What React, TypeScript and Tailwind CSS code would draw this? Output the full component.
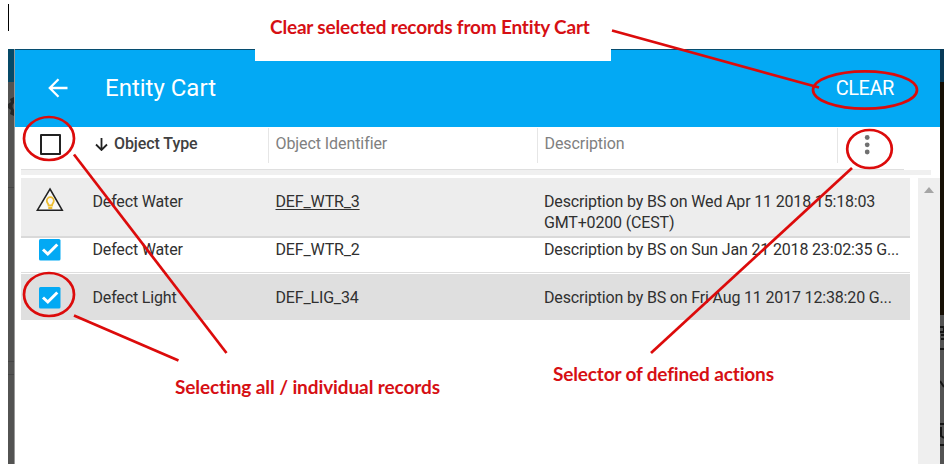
import type { ReactNode } from "react";

const records = [
  {
    type: "Defect Water",
    id: "DEF_WTR_3",
    description: "Description by BS on Wed Apr 11 2018 15:18:03 GMT+0200 (CEST)",
    icon: "warning",
  },
  {
    type: "Defect Water",
    id: "DEF_WTR_2",
    description: "Description by BS on Sun Jan 21 2018 23:02:35 G...",
    icon: "checked",
  },
  {
    type: "Defect Light",
    id: "DEF_LIG_34",
    description: "Description by BS on Fri Aug 11 2017 12:38:20 G...",
    icon: "checked",
  },
];

const rowStyles = [
  "h-[60px] border-b-2 border-[#d9d9d9] bg-[#ededed] pt-[13px]",
  "h-[35px] whitespace-nowrap border-b border-[#dedede] bg-white pt-[1px]",
  "mt-px h-[46px] whitespace-nowrap bg-[#dfdfdf] pt-[13px]",
];

function CheckedBox() {
  return (
    <svg width="22" height="22" viewBox="0 0 22 22">
      <rect width="21.500" height="21.500" rx="1.500" fill="#03a9f4" />
      <path d="M4 10.500 L8.800 15 L18.300 5.500" fill="none" stroke="#fff" strokeWidth="3" />
    </svg>
  );
}

function WarningIcon() {
  return (
    <svg width="28" height="25" viewBox="0 0 28 25">
      <path d="M14 2 L26.3 23.3 H1.3 Z" fill="#f8f8f8" stroke="#222" strokeWidth="1.5" />
      <path
        d="M12.600 18.500 C12.400 16.500 10.800 16 10.800 13.800 A3.500 3.600 0 0 1 17.800 13.800 C17.800 16 16.200 16.500 16 18.500 Z M12.300 21 H16.300"
        fill="none"
        stroke="#edbd30"
        strokeWidth="1.800"
      />
    </svg>
  );
}

function HeaderCell({ className, children }: { className: string; children?: ReactNode }) {
  return (
    <div className={`h-[35px] shrink-0 border-l border-[#e6e6e6] pl-[6.5px] pt-[5px] ${className}`}>
      {children}
    </div>
  );
}

function Annotations() {
  return (
    <>
      <svg className="absolute left-0 top-0" width="948" height="472" fill="none" stroke="#dc0b0b" strokeWidth="2.700">
        <path d="M612 30.500 L819 87.500" />
        <ellipse cx="865" cy="90" rx="52" ry="18.700" />
        <ellipse cx="869.500" cy="149" rx="22.300" ry="19" />
        <path d="M852 168 L651 353" />
        <ellipse cx="49" cy="138.500" rx="25" ry="21.500" />
        <path d="M74 154.500 L226.500 353" />
        <ellipse cx="49" cy="294.500" rx="25" ry="21.500" />
        <path d="M74 315.500 L178.500 360.500" />
      </svg>
      <span className="absolute left-[175px] top-[375px] whitespace-nowrap font-['Lato'] text-[19px] font-bold leading-6 tracking-[-0.1px] text-[#d60f14]">
        Selecting all / individual records
      </span>
      <span className="absolute left-[553px] top-[362px] whitespace-nowrap font-['Lato'] text-[19px] font-bold leading-6 tracking-[-0.15px] text-[#d60f14]">
        Selector of defined actions
      </span>
    </>
  );
}

export default function App() {
  return (
    <div className="relative h-[472px] w-[948px] overflow-hidden bg-white font-['Roboto',sans-serif] text-[16px] leading-[21px] text-[#303030]">
      <div className="flex h-[49px] pl-[8px] pt-[4px]">
        <div className="h-[27px] w-px bg-black" />
      </div>

      <div className="ml-[8px] flex h-[415px] w-[936px]">
        <div className="w-[7px] shrink-0 border-r border-[#999]">
          <svg width="6" height="415">
            <rect width="6" height="33" fill="#054967" />
            <rect y="33" width="6" height="382" fill="#535352" />
            <path d="M6 48 L2 50 L3 53 L0 55 V59 L3 61 L2 65 L6 67" fill="#252525" />
            <path d="M6 54 Q3 57 6 61" fill="#535352" />
            <path d="M0 138.500 H6 M0 312.500 H6 M0 325.500 H6" stroke="#454545" />
          </svg>
        </div>

        <main className="flex w-[925px] shrink-0 flex-col">
          <header className="flex h-[78px] shrink-0 items-center border-t border-[#064d70] bg-[#03a9f4] text-white">
            <svg className="-mt-px ml-[33px]" width="20" height="20" viewBox="0 0 20 20" fill="none" stroke="white" strokeWidth="2.300">
              <path d="M19.500 10 H2 M10.500 1.200 L1.800 10 L10.500 18.800" />
            </svg>
            <h1 className="-mt-px ml-[37px] text-[24px] leading-8">Entity Cart</h1>
            <button className="-mt-px ml-auto mr-[46px] text-[20px] leading-6 tracking-[-0.45px]">CLEAR</button>
          </header>

          <div className="flex h-[42px] shrink-0 pl-[6px] pt-[1px] tracking-[-0.08px] text-[#808080]">
            <div className="w-[247px] shrink-0">
              <div className="flex">
                <div className="ml-[19px] mt-[6px] h-[21px] w-[21px] rounded-[1px] border-2 border-[#222] bg-white" />
                <svg className="ml-[34px] mt-[10px]" width="13" height="13" viewBox="0 0 13 13" fill="none" stroke="#222" strokeWidth="1.800">
                  <path d="M6.500 0 V12 M1 6.500 L6.500 12 L12 6.500" />
                </svg>
                <span className="ml-[6px] pt-[5px] font-medium text-[#404040]">Object Type</span>
              </div>
            </div>
            <HeaderCell className="w-[269px]">Object Identifier</HeaderCell>
            <HeaderCell className="w-[300px]">Description</HeaderCell>
            <HeaderCell className="w-[60px]">
              <svg className="ml-[19px] mt-[2px]" width="6" height="20" fill="#707070">
                <circle cx="3.200" cy="2.500" r="2.400" />
                <circle cx="3.200" cy="9.800" r="2.400" />
                <circle cx="3.200" cy="17" r="2.400" />
              </svg>
            </HeaderCell>
          </div>
          <div className="ml-[6px] h-px w-[883px] shrink-0 bg-[#dfdfdf]" />
          <div className="mb-[3px] ml-[6px] h-[5px] w-[910px] shrink-0 bg-[#f0f0f0]" />

          <div className="flex min-h-0 flex-1 justify-between pl-[6px] tracking-[-0.165px]">
            <div className="w-[889px]">
              {records.map((record, i) => (
                <div key={record.id} className={`flex ${rowStyles[i]}`}>
                  <div className="w-[71.5px] shrink-0">
                    {record.icon === "warning" ? (
                      <div className="-mt-[4px] ml-[15px]"><WarningIcon /></div>
                    ) : (
                      <div className="ml-[18px]"><CheckedBox /></div>
                    )}
                  </div>
                  <span className="w-[183px] shrink-0">{record.type}</span>
                  <span className="w-[268.5px] shrink-0">
                    <span className={i === 0 ? "underline underline-offset-2" : ""}>{record.id}</span>
                  </span>
                  <span className="w-[360px] shrink-0">{record.description}</span>
                </div>
              ))}
            </div>
            <div className="flex w-[22px] justify-center bg-[#efefef] pt-[9px]">
              <svg width="10" height="6"><path d="M0 6 L5 0 L10 6 Z" fill="#a5a5a5" /></svg>
            </div>
          </div>
        </main>

        <svg width="4" height="415" className="shrink-0">
          <rect width="4" height="33" fill="#073a58" />
          <rect y="33" width="4" height="233" fill="#160f04" />
          <rect y="266" width="4" height="149" fill="#535353" />
          <path d="M0 278 H4 V283 H0 M1 286 H4 M1 290 H4 M0 300 H4 M0 332 L4 338 M0 375 H4 M1 378 V387 L4 389 M0 396 H4" fill="none" stroke="#151515" strokeWidth="2" />
        </svg>
      </div>

      <div className="absolute left-[255px] top-[10px] h-[51px] w-[356px] bg-white pl-[15px] pt-[5px]">
        <span className="whitespace-nowrap font-['Lato'] text-[19px] font-bold leading-6 tracking-[-0.18px] text-[#d60f14]">
          Clear selected records from Entity Cart
        </span>
      </div>
      <Annotations />
    </div>
  );
}
